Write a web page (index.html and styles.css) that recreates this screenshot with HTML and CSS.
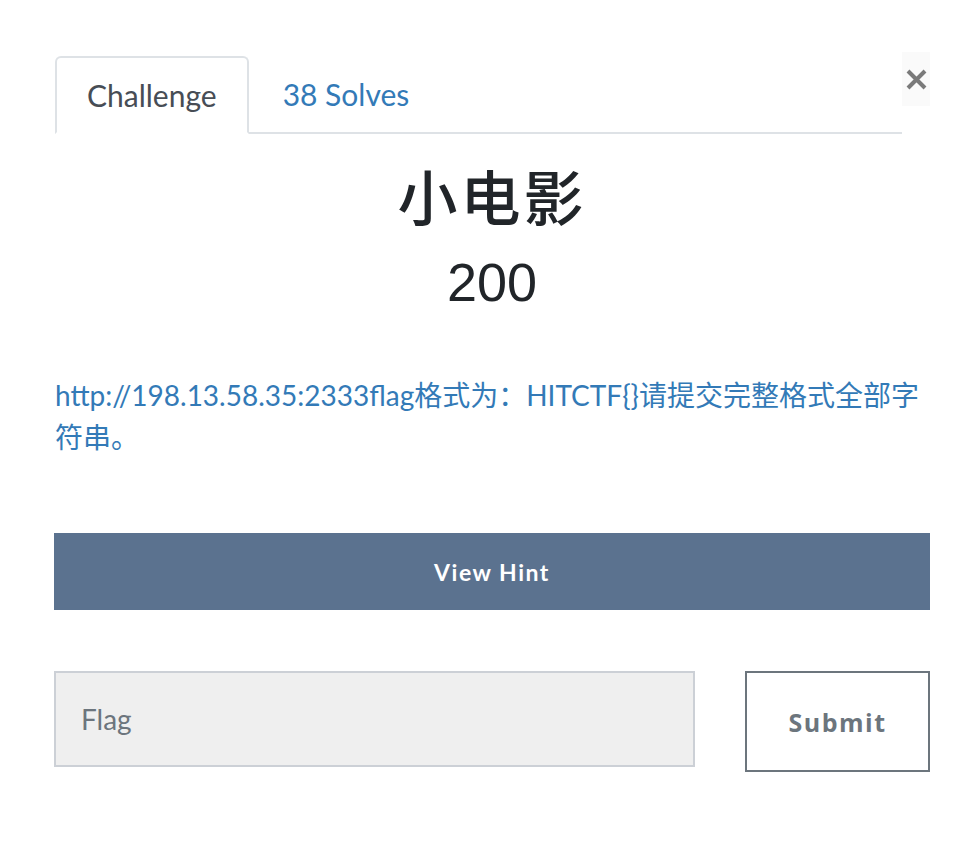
FILE: index.html
```html
<!DOCTYPE html>
<html>
<head>
<meta charset="utf-8">
<link rel="stylesheet" href="styles.css">
</head>
<body>
<div class="modal">
  <div class="header">
    <ul class="tabs">
      <li class="tab active">Challenge</li>
      <li class="tab link">38 Solves</li>
    </ul>
    <button class="close" aria-label="Close">
      <svg width="21" height="21" viewBox="0 0 21 21"><path d="M2 2L19 19M19 2L2 19" stroke="#7a7a7a" stroke-width="4" stroke-linecap="butt"/></svg>
    </button>
  </div>
  <h2 class="title">小电影</h2>
  <h3 class="points">200</h3>
  <p class="desc">http://198.13.58.35:2333flag格式为：HITCTF{}请提交完整格式全部字符串。</p>
  <button class="hint">View Hint</button>
  <div class="submit-row">
    <div class="flag-input">Flag</div>
    <button class="submit">Submit</button>
  </div>
</div>
</body>
</html>
```
FILE: styles.css
```css
html, body {
  margin: 0;
  padding: 0;
  background: #ffffff;
}
body {
  font-family: Lato, "Noto Sans CJK SC", sans-serif;
}
.modal {
  padding: 52px 48px 0 54px;
}
.header {
  display: flex;
  align-items: flex-start;
}
.tabs {
  flex: 1;
  display: flex;
  list-style: none;
  margin: 4px 0 0 1px;
  padding: 0;
  border-bottom: 2px solid #dee2e6;
  height: 76px;
}
.tab {
  font-size: 30px;
  height: 76px;
  box-sizing: border-box;
  display: flex;
  align-items: center;
  margin-bottom: -2px;
}
.tab.active {
  border: 2px solid #dee2e6;
  border-bottom-color: #ffffff;
  border-radius: 6px 6px 0 0;
  color: #474d55;
  padding: 0 30px;
  height: 78px;
}
.tab.link {
  color: #337ab7;
  padding: 0 34px;
}
.close {
  width: 28px;
  height: 54px;
  border: none;
  padding: 0;
  background: #fafafa;
  display: flex;
  align-items: center;
  justify-content: center;
}
.title {
  margin: 34px 0 0;
  text-align: center;
  font-family: "Liberation Sans", "Noto Sans CJK SC", sans-serif;
  font-size: 60px;
  font-weight: 500;
  letter-spacing: 3px;
  color: #212529;
  line-height: 66px;
}
.points {
  margin: 18px 0 0;
  text-align: center;
  font-family: "Liberation Sans", sans-serif;
  font-weight: 400;
  font-size: 54px;
  line-height: 60px;
  color: #212529;
}
.desc {
  margin: 62px 0 0 1px;
  font-size: 28px;
  line-height: 42px;
  color: #337ab7;
}
.hint {
  display: block;
  width: 100%;
  margin-top: 75px;
  height: 77px;
  border: none;
  background: #5b728f;
  color: #ffffff;
  font-family: Lato, sans-serif;
  font-weight: 700;
  font-size: 23px;
  letter-spacing: 1.5px;
}
.submit-row {
  display: flex;
  align-items: flex-start;
  justify-content: space-between;
  margin-top: 61px;
}
.flag-input {
  width: 641px;
  height: 96px;
  box-sizing: border-box;
  background: #efefef;
  border: 2px solid #ccd0d6;
  color: #6c757d;
  font-size: 28px;
  padding-left: 25px;
  display: flex;
  align-items: center;
}
.submit {
  width: 185px;
  height: 101px;
  box-sizing: border-box;
  background: #ffffff;
  border: 2px solid #6c757d;
  color: #6c757d;
  font-family: "Open Sans", Lato, sans-serif;
  font-weight: 700;
  font-size: 25px;
  letter-spacing: 1.5px;
}
```
